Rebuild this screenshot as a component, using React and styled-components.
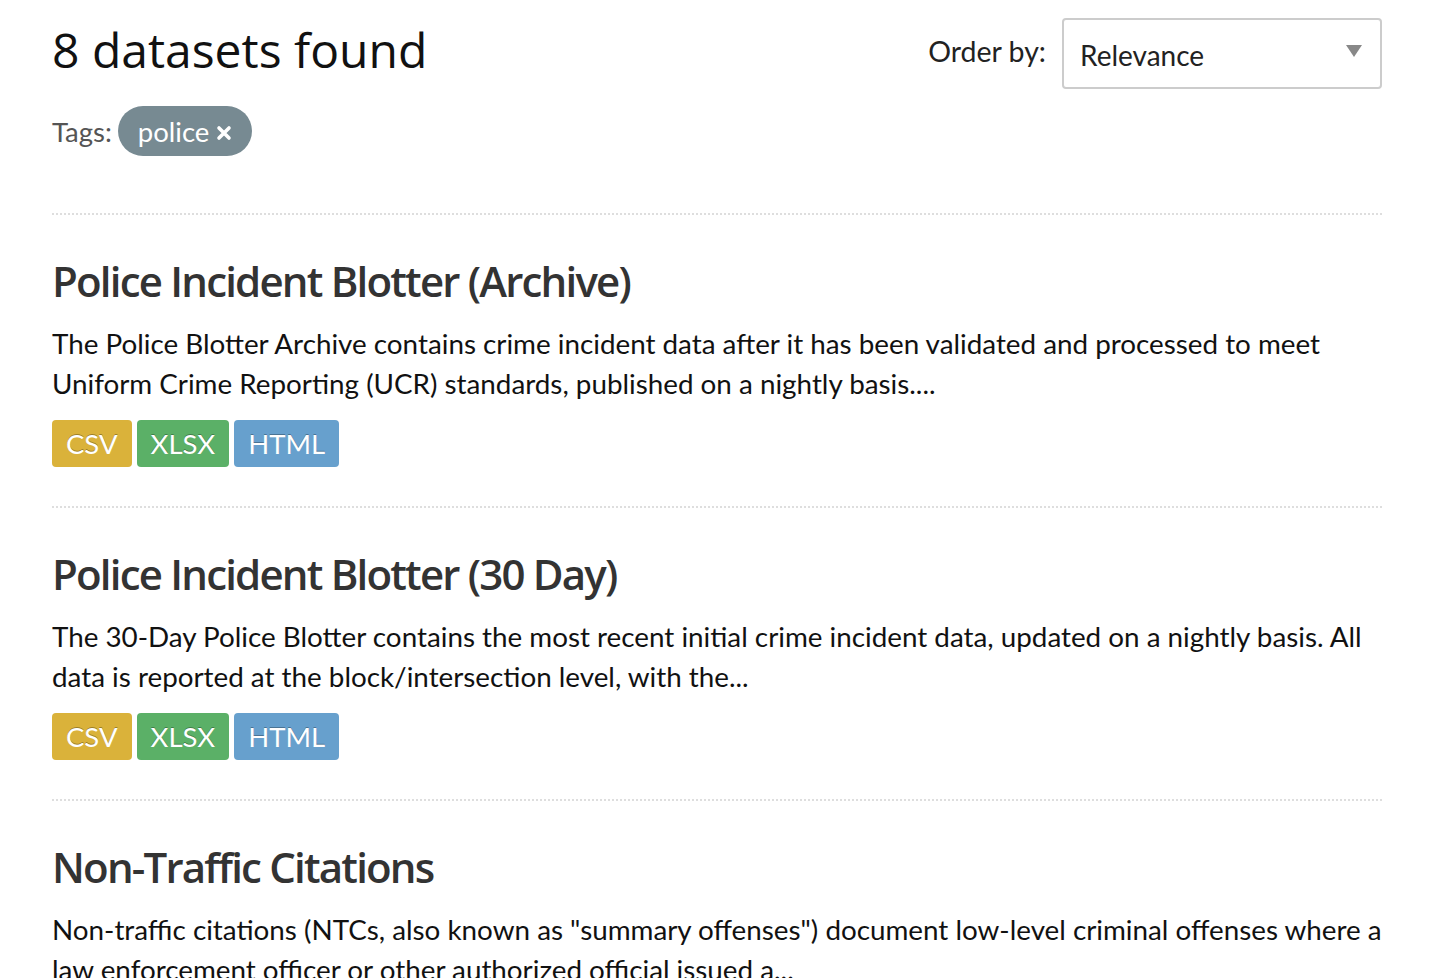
import React from 'react'
import styled, { createGlobalStyle } from 'styled-components'

const GlobalStyle = createGlobalStyle`
  body {
    margin: 0;
    background: #fff;
    font-family: Lato, "Liberation Sans", sans-serif;
    color: #222;
  }
`

const datasets = [
  {
    title: 'Police Incident Blotter (Archive)',
    notes: 'The Police Blotter Archive contains crime incident data after it has been validated and processed to meet Uniform Crime Reporting (UCR) standards, published on a nightly basis....',
    formats: ['CSV', 'XLSX', 'HTML'],
  },
  {
    title: 'Police Incident Blotter (30 Day)',
    notes: 'The 30-Day Police Blotter contains the most recent initial crime incident data, updated on a nightly basis. All data is reported at the block/intersection level, with the...',
    formats: ['CSV', 'XLSX', 'HTML'],
  },
  {
    title: 'Non-Traffic Citations',
    notes: 'Non-traffic citations (NTCs, also known as "summary offenses") document low-level criminal offenses where a law enforcement officer or other authorized official issued a...',
    formats: ['CSV', 'XLSX', 'HTML'],
  },
]

const formatColors = {
  CSV: '#dab23a',
  XLSX: '#5bb067',
  HTML: '#67a0cd',
}

function App() {
  return (
    <Page>
      <GlobalStyle />
      <Header>
        <div>
          <Count>8 datasets found</Count>
          <Filters>
            <span>Tags:</span>
            <TagPill>
              police
              <svg width='16' height='16' viewBox='0 0 16 16'>
                <path d='M3 3 L13 13 M13 3 L3 13' stroke='#fff' strokeWidth='3.6' strokeLinecap='round' />
              </svg>
            </TagPill>
          </Filters>
        </div>
        <OrderBy>
          <label>Order by:</label>
          <Select>
            <span>Relevance</span>
            <Caret />
          </Select>
        </OrderBy>
      </Header>
      <List>
        {datasets.map((d) => (
          <Item key={d.title}>
            <Title>{d.title}</Title>
            <Notes>{d.notes}</Notes>
            <Formats>
              {d.formats.map((f) => (
                <Badge key={f} $color={formatColors[f]}>{f}</Badge>
              ))}
            </Formats>
          </Item>
        ))}
      </List>
    </Page>
  )
}

export default App

const Page = styled.div`
  width: 1330px;
  padding: 0 52px;
  height: 978px;
  overflow: hidden;
`

const Header = styled.div`
  display: flex;
  justify-content: space-between;
  align-items: flex-start;
  padding-top: 18px;
  padding-bottom: 57px;
  border-bottom: 2px dotted #dedede;
`

const Count = styled.h1`
  margin: 0;
  font-family: "Open Sans", "Liberation Sans", sans-serif;
  font-weight: 400;
  font-size: 48px;
  line-height: 64px;
  color: #111;
`

const Filters = styled.div`
  display: flex;
  align-items: center;
  gap: 6px;
  margin-top: 24px;
  font-size: 27.5px;
  color: #555;
`

const TagPill = styled.span`
  display: inline-flex;
  align-items: center;
  gap: 7px;
  height: 50px;
  padding: 0 20px;
  border-radius: 25px;
  background: #778a92;
  color: #fff;
  font-size: 27.5px;
  svg {
    margin-top: 3px;
  }
`

const OrderBy = styled.div`
  display: flex;
  align-items: center;
  gap: 16px;
  font-size: 28.5px;
  color: #222;
  label {
    margin-top: -6px;
  }
`

const Select = styled.div`
  display: flex;
  align-items: center;
  justify-content: space-between;
  box-sizing: border-box;
  width: 320px;
  height: 71px;
  padding: 0 18px 0 16px;
  border: 2px solid #ccc;
  border-radius: 4px;
  font-size: 28px;
  color: #222;
  span {
    margin-top: 2px;
  }
`

const Caret = styled.span`
  width: 0;
  height: 0;
  margin-top: -6px !important;
  border-left: 8px solid transparent;
  border-right: 8px solid transparent;
  border-top: 12px solid #888;
`

const List = styled.div`
  display: flex;
  flex-direction: column;
`

const Item = styled.div`
  padding: 38px 0 39px;
  border-bottom: 2px dotted #dedede;
`

const Title = styled.h2`
  margin: 0 0 15px;
  font-family: "Open Sans", "Liberation Sans", sans-serif;
  font-weight: 600;
  font-size: 42px;
  letter-spacing: -1.8px;
  line-height: 56px;
  color: #333;
`

const Notes = styled.p`
  margin: 0 0 16px;
  font-size: 27.8px;
  line-height: 40px;
  color: #111;
`

const Formats = styled.div`
  display: flex;
  gap: 5px;
`

const Badge = styled.span`
  display: inline-flex;
  align-items: center;
  height: 47px;
  padding: 0 14px;
  border-radius: 4px;
  background: ${(p) => p.$color};
  color: #fff;
  font-size: 27.5px;
  text-shadow: 0 -1px 0 rgba(0, 0, 0, 0.3);
`
